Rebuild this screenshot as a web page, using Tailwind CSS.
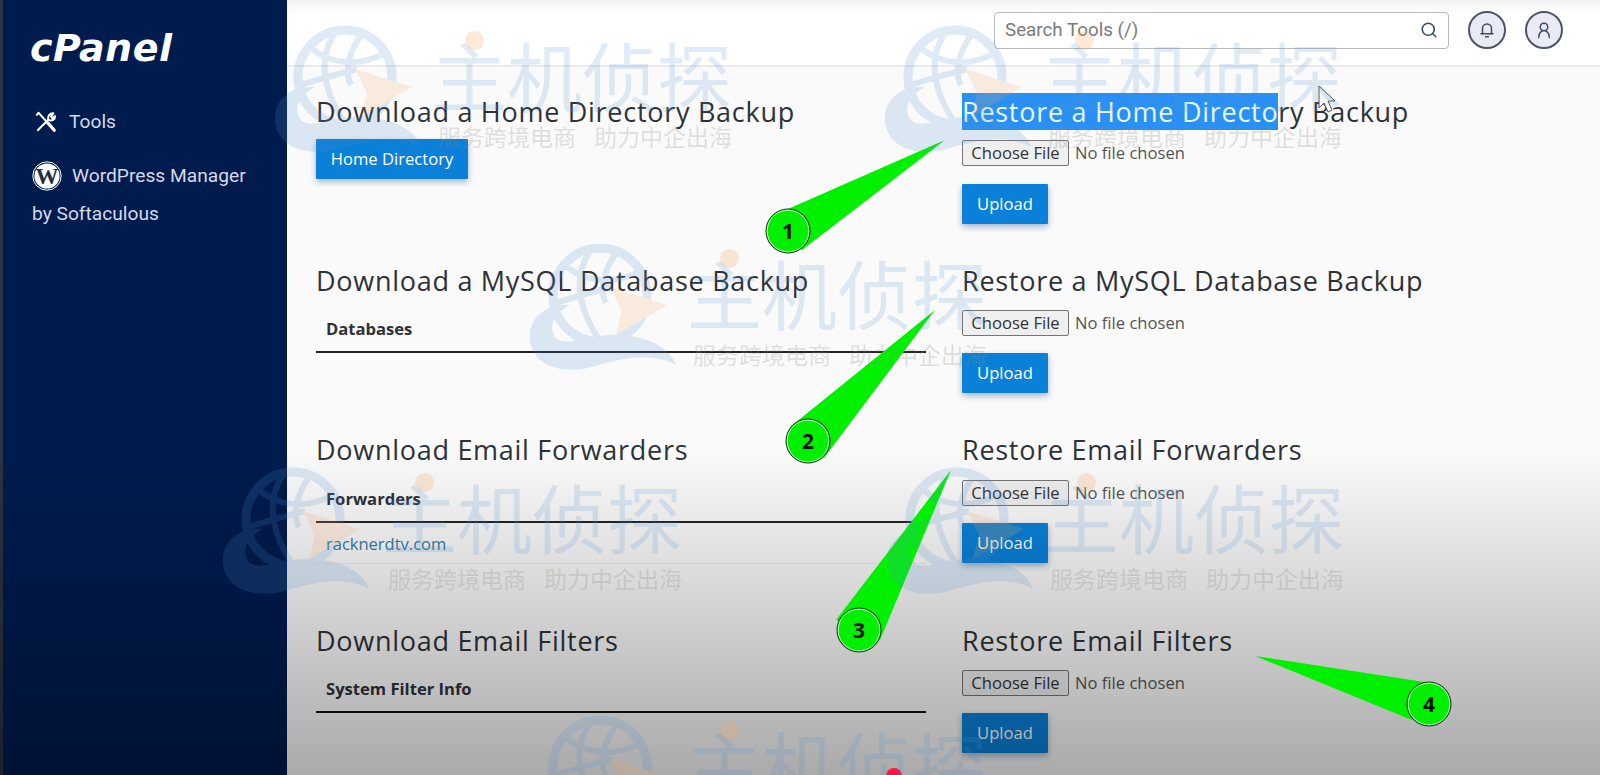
<!doctype html>
<html lang="en">
<head>
<meta charset="utf-8">
<title>cPanel Backup</title>
<script src="https://cdn.jsdelivr.net/npm/@tailwindcss/browser@4"></script>
</head>
<body class="w-[1600px] h-[775px] overflow-hidden bg-[#fafafa] font-['Open_Sans',sans-serif]">
<svg class="hidden">
  <symbol id="wm" viewBox="0 0 150 130">
    <circle cx="70" cy="52" r="47" fill="none" stroke="#4f8fcf" stroke-width="9"/>
    <path d="M35 22 C55 40 85 42 110 28 M26 60 C50 52 60 50 82 44 M60 8 C42 35 48 65 70 98 M86 10 C72 30 70 50 76 60" fill="none" stroke="#4f8fcf" stroke-width="6"/>
    <path d="M0 93 C0 72 20 60 40 62 C28 68 18 80 24 92 C32 108 60 90 90 92 C120 94 140 105 146 122 C120 108 90 116 62 124 C30 132 0 122 0 93Z" fill="#4f8fcf"/>
    <path d="M80 44 L137 62 L86 92 L92 68Z" fill="#f2a860"/>
  </symbol>
</svg>

<div class="relative flex w-full h-full">
  <!-- sidebar -->
  <aside class="w-[287px] h-full shrink-0 bg-[#001b4e] border-l-[3px] border-[#2c3240] text-[#d6d9e8] font-['Roboto',sans-serif] text-[19.2px]">
    <div class="h-[98px] pl-[27px] pt-[24px]">
      <span class="text-white italic font-bold text-[38px] leading-[48px] tracking-[0.5px] font-['DejaVu_Sans',sans-serif]">cPanel</span>
    </div>
    <div class="flex items-center gap-[12px] pl-[32px] h-[48px]">
      <svg class="w-[22px] h-[22px]" viewBox="0 0 24 24" fill="none" stroke="#fff" stroke-width="2.2" stroke-linecap="round" stroke-linejoin="round">
        <path d="M2 4 L4 2 L13 12"/><path d="M14 13 L21 21" stroke-width="3.6"/><path d="M3 21 L14.5 9.5"/><path d="M14.5 9.5 C13.5 6 15.5 2.5 20 2.5 L17.5 6 L19 8 L22 5.5 C22 9.5 18.5 11 15.5 10"/>
      </svg>
      <span>Tools</span>
    </div>
    <div class="pl-[29px] pt-[11px] leading-[38px]">
      <div class="flex items-center gap-[10px] h-[38px]">
        <svg class="w-[30px] h-[30px]" viewBox="0 0 30 30">
          <circle cx="15" cy="15" r="14.2" fill="none" stroke="#fff" stroke-width="1"/>
          <circle cx="15" cy="15" r="12.6" fill="#fff"/>
          <text x="15" y="23" text-anchor="middle" font-size="23" font-weight="700" fill="#26303f" font-family="Liberation Serif">W</text>
        </svg>
        <span>WordPress Manager</span>
      </div>
      <div>by Softaculous</div>
    </div>
  </aside>

  <!-- main -->
  <div class="flex-1 min-w-0 flex flex-col">
    <header class="h-[67px] shrink-0 bg-linear-to-b from-[#f1f1f1] to-white from-0% to-[20%] border-b-2 border-[#eaeaea] flex items-center justify-end pr-[37px] pb-[5px] gap-[19px]">
      <div class="w-[455px] h-[37px] bg-white border border-[#b9b9b9] rounded-[4px] flex items-center justify-between pl-[10px] pr-[10px]">
        <span class="font-['Roboto',sans-serif] text-[18.8px] text-[#7a7a7a]">Search Tools (/)</span>
        <svg class="w-[18px] h-[18px]" viewBox="0 0 24 24" fill="none" stroke="#3b5566" stroke-width="2.2" stroke-linecap="round"><circle cx="11" cy="11" r="8"/><path d="M17 17 L21 21"/></svg>
      </div>
      <div class="w-[38px] h-[38px] rounded-full bg-[#e9eaf6] border-2 border-[#4e5468] flex items-center justify-center">
        <svg class="w-[18px] h-[18px]" viewBox="0 0 24 24" fill="none" stroke="#3f4a60" stroke-width="2" stroke-linecap="round" stroke-linejoin="round"><path d="M6 17 V10 a6 6 0 0 1 12 0 V17"/><path d="M4 17 H20"/><path d="M10 21 H14"/></svg>
      </div>
      <div class="w-[38px] h-[38px] rounded-full bg-[#e9eaf6] border-2 border-[#4e5468] flex items-center justify-center">
        <svg class="w-[18px] h-[18px]" viewBox="0 0 24 24" fill="none" stroke="#3f4a60" stroke-width="2" stroke-linecap="round" stroke-linejoin="round"><circle cx="12" cy="8" r="5"/><path d="M5 22 C5 16 8 14 10 13 M19 22 C19 16 16 14 14 13"/></svg>
      </div>
    </header>

    <main class="pl-[29px] pt-[26px] grid grid-cols-[646px_1fr] grid-rows-[170px_169px_191px_auto] text-[#2e3238]">
      <!-- row 1 -->
      <section>
        <h2 class="text-[27px] leading-[37px] font-normal tracking-[0.72px]">Download a Home Directory Backup</h2>
        <button class="mt-[9px] h-[40px] w-[152px] bg-[#0a80d8] text-white text-[16.6px] rounded-[1px] shadow-[0_3px_6px_rgba(0,60,120,0.35)]">Home Directory</button>
      </section>
      <section>
        <h2 class="text-[27px] leading-[37px] font-normal tracking-[0.72px]"><span class="bg-[#2b90f3] text-[#e8fbff]">Restore a Home Directo</span>ry Backup</h2>
        <input type="file" class="block mt-[10px] h-[26px] w-[260px] text-[16.6px] text-[#555] file:h-[26px] file:w-[107px] file:mr-[6px] file:bg-[#efefef] file:text-[#333] file:border file:border-[#767676] file:rounded-[2px] file:text-[16.6px]">
        <button class="block mt-[18px] h-[40px] w-[86px] bg-[#0a80d8] text-white text-[16.6px] rounded-[1px] shadow-[0_3px_6px_rgba(0,60,120,0.35)]">Upload</button>
      </section>
      <!-- row 2 -->
      <section>
        <h2 class="-translate-y-px text-[27px] leading-[37px] font-normal tracking-[0.72px]">Download a MySQL Database Backup</h2>
        <div class="w-[610px] mt-[17px] h-[36px] pl-[10px] border-b-2 border-[#222] font-bold text-[16.6px] leading-[24px]">Databases</div>
      </section>
      <section>
        <h2 class="-translate-y-px text-[27px] leading-[37px] font-normal tracking-[0.72px]">Restore a MySQL Database Backup</h2>
        <input type="file" class="block mt-[10px] h-[26px] w-[260px] text-[16.6px] text-[#555] file:h-[26px] file:w-[107px] file:mr-[6px] file:bg-[#efefef] file:text-[#333] file:border file:border-[#767676] file:rounded-[2px] file:text-[16.6px]">
        <button class="block mt-[17px] h-[40px] w-[86px] bg-[#0a80d8] text-white text-[16.6px] rounded-[1px] shadow-[0_3px_6px_rgba(0,60,120,0.35)]">Upload</button>
      </section>
      <!-- row 3 -->
      <section>
        <h2 class="-translate-y-px text-[27px] leading-[37px] font-normal tracking-[0.72px]">Download Email Forwarders</h2>
        <div class="w-[610px] mt-[18px] h-[36px] pl-[10px] border-b-2 border-[#222] font-bold text-[16.6px] leading-[24px]">Forwarders</div>
        <div class="w-[610px] h-[41px] pl-[10px] pt-[9px] border-b border-[#e4e4e4]/60 text-[16.5px] leading-[24px] text-[#2f7eaa]">racknerdtv.com</div>
      </section>
      <section>
        <h2 class="-translate-y-px text-[27px] leading-[37px] font-normal tracking-[0.72px]">Restore Email Forwarders</h2>
        <input type="file" class="block mt-[11px] h-[26px] w-[260px] text-[16.6px] text-[#555] file:h-[26px] file:w-[107px] file:mr-[6px] file:bg-[#efefef] file:text-[#333] file:border file:border-[#767676] file:rounded-[2px] file:text-[16.6px]">
        <button class="block mt-[17px] h-[40px] w-[86px] bg-[#0a80d8] text-white text-[16.6px] rounded-[1px] shadow-[0_3px_6px_rgba(0,60,120,0.35)]">Upload</button>
      </section>
      <!-- row 4 -->
      <section>
        <h2 class="-translate-y-px text-[27px] leading-[37px] font-normal tracking-[0.72px]">Download Email Filters</h2>
        <div class="w-[610px] mt-[17px] h-[36px] pl-[10px] border-b-2 border-[#111] font-bold text-[16.6px] leading-[24px]">System Filter Info</div>
      </section>
      <section>
        <h2 class="-translate-y-px text-[27px] leading-[37px] font-normal tracking-[0.72px]">Restore Email Filters</h2>
        <input type="file" class="block mt-[10px] h-[26px] w-[260px] text-[16.6px] text-[#555] file:h-[26px] file:w-[107px] file:mr-[6px] file:bg-[#efefef] file:text-[#333] file:border file:border-[#767676] file:rounded-[2px] file:text-[16.6px]">
        <button class="block mt-[17px] h-[40px] w-[86px] bg-[#0a80d8] text-white text-[16.6px] rounded-[1px] shadow-[0_3px_6px_rgba(0,60,120,0.35)]">Upload</button>
      </section>
    </main>
  </div>

  <!-- bottom shading -->
  <div class="absolute inset-0 pointer-events-none bg-linear-to-b from-transparent from-[58%] to-black/32"></div>

  <!-- green callouts -->
  <svg class="absolute inset-0 w-[1600px] h-[775px] pointer-events-none" viewBox="0 0 1600 775" font-family="Open Sans" font-weight="700" font-size="21" text-anchor="middle">
    <polygon points="945,140 772,216 802,250" fill="#00f000"/>
    <polygon points="935,310 790,427 824,458" fill="#00f000"/>
    <polygon points="951,470 836,620 880,640" fill="#00f000"/>
    <polygon points="1255,656 1424,682 1412,720" fill="#00f000"/>
    <g fill="#00f000" stroke="#222" stroke-width="1">
      <circle cx="788" cy="231" r="22"/><circle cx="808" cy="441" r="22"/><circle cx="859" cy="630" r="22"/><circle cx="1429" cy="704" r="22"/>
    </g>
    <g fill="none" stroke="#e8ffe8" stroke-width="0.8">
      <circle cx="788" cy="231" r="20.8"/><circle cx="808" cy="441" r="20.8"/><circle cx="859" cy="630" r="20.8"/><circle cx="1429" cy="704" r="20.8"/>
    </g>
    <g fill="#06120a">
      <text x="788" y="239">1</text><text x="808" y="449">2</text><text x="859" y="638">3</text><text x="1429" y="712">4</text>
    </g>
    <path d="M1319 86 V108 L1324 103 L1328 112 L1332 110 L1328 101 L1335 101Z" fill="#f7f7f7" stroke="#555" stroke-width="1"/>
    <circle cx="894" cy="776" r="8" fill="#ff1744"/>
  </svg>

  <!-- watermarks -->
  <div class="absolute left-[275px] top-[25px] w-[460px] h-[135px] pointer-events-none">
    <svg class="absolute left-0 top-0 w-[150px] h-[130px] opacity-[0.18]"><use href="#wm"/></svg>
    <div class="absolute left-[157px] top-[9px] text-[75px] leading-[80px] font-normal text-[#4f8fcf]/18 whitespace-nowrap font-['Noto_Sans_CJK_SC',sans-serif]">主机侦探</div>
    <div class="absolute left-[190px] top-[6px] w-[19px] h-[19px] rounded-full bg-[#f2a860]/25"></div>
    <div class="absolute left-[163px] top-[96px] text-[23px] leading-[30px] text-[#888]/25 whitespace-nowrap font-['Noto_Sans_CJK_SC',sans-serif]">服务跨境电商<span class="ml-[18px]">助力中企出海</span></div>
  </div>
  <div class="absolute left-[885px] top-[25px] w-[460px] h-[135px] pointer-events-none">
    <svg class="absolute left-0 top-0 w-[150px] h-[130px] opacity-[0.18]"><use href="#wm"/></svg>
    <div class="absolute left-[157px] top-[9px] text-[75px] leading-[80px] font-normal text-[#4f8fcf]/18 whitespace-nowrap font-['Noto_Sans_CJK_SC',sans-serif]">主机侦探</div>
    <div class="absolute left-[190px] top-[6px] w-[19px] h-[19px] rounded-full bg-[#f2a860]/25"></div>
    <div class="absolute left-[163px] top-[96px] text-[23px] leading-[30px] text-[#888]/25 whitespace-nowrap font-['Noto_Sans_CJK_SC',sans-serif]">服务跨境电商<span class="ml-[18px]">助力中企出海</span></div>
  </div>
  <div class="absolute left-[530px] top-[243px] w-[460px] h-[135px] pointer-events-none">
    <svg class="absolute left-0 top-0 w-[150px] h-[130px] opacity-[0.18]"><use href="#wm"/></svg>
    <div class="absolute left-[157px] top-[9px] text-[75px] leading-[80px] font-normal text-[#4f8fcf]/18 whitespace-nowrap font-['Noto_Sans_CJK_SC',sans-serif]">主机侦探</div>
    <div class="absolute left-[190px] top-[6px] w-[19px] h-[19px] rounded-full bg-[#f2a860]/25"></div>
    <div class="absolute left-[163px] top-[96px] text-[23px] leading-[30px] text-[#888]/25 whitespace-nowrap font-['Noto_Sans_CJK_SC',sans-serif]">服务跨境电商<span class="ml-[18px]">助力中企出海</span></div>
  </div>
  <div class="absolute left-[223px] top-[467px] w-[460px] h-[135px] pointer-events-none">
    <svg class="absolute left-0 top-0 w-[150px] h-[130px] opacity-[0.18]"><use href="#wm"/></svg>
    <div class="absolute left-[159px] top-[9px] text-[75px] leading-[80px] font-normal text-[#4f8fcf]/18 whitespace-nowrap font-['Noto_Sans_CJK_SC',sans-serif]">主机侦探</div>
    <div class="absolute left-[192px] top-[6px] w-[19px] h-[19px] rounded-full bg-[#f2a860]/25"></div>
    <div class="absolute left-[165px] top-[96px] text-[23px] leading-[30px] text-[#888]/25 whitespace-nowrap font-['Noto_Sans_CJK_SC',sans-serif]">服务跨境电商<span class="ml-[18px]">助力中企出海</span></div>
  </div>
  <div class="absolute left-[887px] top-[467px] w-[460px] h-[135px] pointer-events-none">
    <svg class="absolute left-0 top-0 w-[150px] h-[130px] opacity-[0.18]"><use href="#wm"/></svg>
    <div class="absolute left-[157px] top-[9px] text-[75px] leading-[80px] font-normal text-[#4f8fcf]/18 whitespace-nowrap font-['Noto_Sans_CJK_SC',sans-serif]">主机侦探</div>
    <div class="absolute left-[190px] top-[6px] w-[19px] h-[19px] rounded-full bg-[#f2a860]/25"></div>
    <div class="absolute left-[163px] top-[96px] text-[23px] leading-[30px] text-[#888]/25 whitespace-nowrap font-['Noto_Sans_CJK_SC',sans-serif]">服务跨境电商<span class="ml-[18px]">助力中企出海</span></div>
  </div>
  <div class="absolute left-[530px] top-[715px] w-[460px] h-[60px] overflow-hidden pointer-events-none">
    <svg class="absolute left-0 top-0 w-[150px] h-[130px] opacity-[0.18]"><use href="#wm"/></svg>
    <div class="absolute left-[157px] top-[9px] text-[75px] leading-[80px] font-normal text-[#4f8fcf]/18 whitespace-nowrap font-['Noto_Sans_CJK_SC',sans-serif]">主机侦探</div>
    <div class="absolute left-[190px] top-[6px] w-[19px] h-[19px] rounded-full bg-[#f2a860]/25"></div>
  </div>
</div>
</body>
</html>
